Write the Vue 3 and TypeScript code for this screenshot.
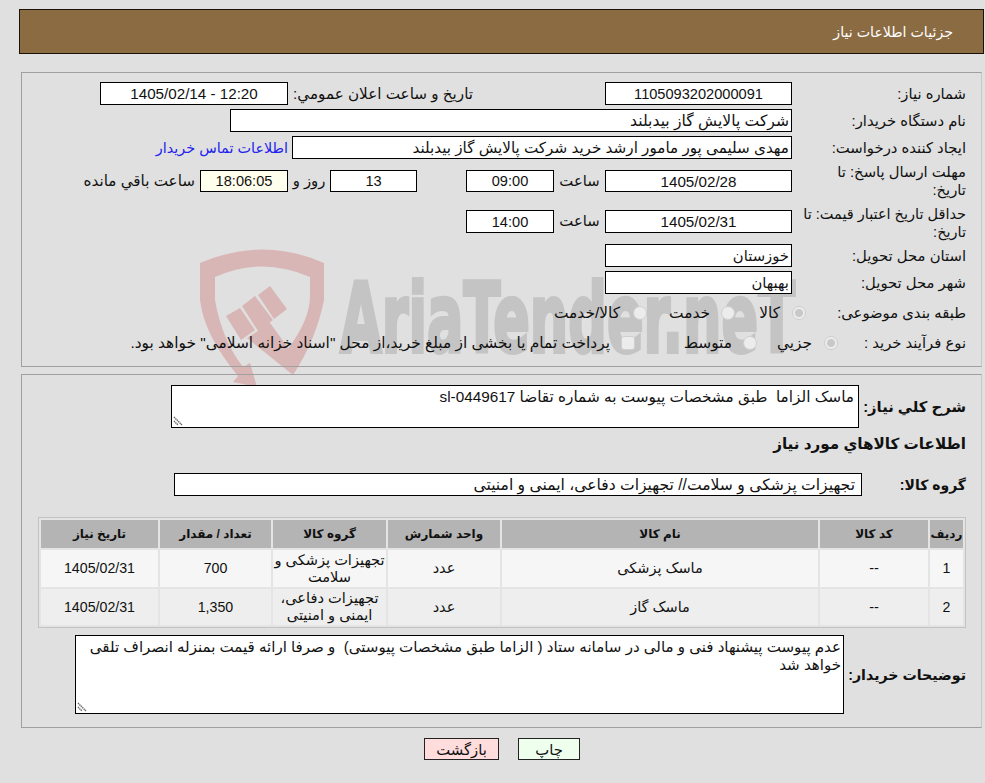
<script setup lang="ts">
interface Item { row: string; code: string; name: string; unit: string; group: string[]; qty: string; date: string }
const items: Item[] = [
  { row: '1', code: '--', name: 'ماسک پزشکی', unit: 'عدد', group: ['تجهیزات پزشکی و', 'سلامت'], qty: '700', date: '1405/02/31' },
  { row: '2', code: '--', name: 'ماسک گاز', unit: 'عدد', group: ['تجهیزات دفاعی،', 'ایمنی و امنیتی'], qty: '1,350', date: '1405/02/31' },
]
</script>

<template>
  <div class="page" dir="rtl">
    <svg class="mark" width="985" height="400" viewBox="0 0 985 400" aria-hidden="true">
      <path d="M200 263 Q263 236 324 263 L324 300 Q316 340 293 375 L287 350 Q310 320 310 296 L310 277 Q262 256 215 277 L215 300 Q222 340 243 367 L250 363 L257 387 L233 382 L238 376 Q204 335 200 300 Z" fill="#d9b6b6" />
      <path d="M226 316 L240 308 L255 330 L241 340 Z M242 306 L255 296 L273 320 L258 332 L268 320 L291 352 L293 375 L247 338 L258 331 Z M258 295 L270 286 L287 309 L274 319 Z" fill="#d9b6b6" />
      <text class="mark-text" x="340" y="352" textLength="455" lengthAdjust="spacingAndGlyphs" dir="ltr">AriaTender.neT</text>
    </svg>

    <header class="title">جزئیات اطلاعات نیاز</header>

    <section class="panel first">
      <div class="row">
        <div class="label">شماره نیاز:</div>
        <div class="box center num date-w">1105093202000091</div>
        <div class="pub-label">تاریخ و ساعت اعلان عمومي:</div>
        <div class="box center dnum pub-w" dir="ltr">1405/02/14 - 12:20</div>
      </div>
      <div class="row">
        <div class="label">نام دستگاه خریدار:</div>
        <div class="box buyer-w">شرکت پالایش گاز بیدبلند</div>
      </div>
      <div class="row">
        <div class="label">ایجاد کننده درخواست:</div>
        <div class="box creator-w">مهدی سلیمی پور مامور ارشد خرید شرکت پالایش گاز بیدبلند</div>
        <a class="link">اطلاعات تماس خریدار</a>
      </div>
      <div class="row tall r4">
        <div class="label two">مهلت ارسال پاسخ: تا<br />تاریخ:</div>
        <div class="box slim center dnum date-w">1405/02/28</div>
        <div class="hour">ساعت</div>
        <div class="box slim center num time-w">09:00</div>
        <div class="box slim center num days-w">13</div>
        <div class="days-label">روز و</div>
        <div class="box slim center num timer">18:06:05</div>
        <div class="remain">ساعت باقي مانده</div>
      </div>
      <div class="row tall r5">
        <div class="label two small">حداقل تاریخ اعتبار قیمت: تا<br />تاریخ:</div>
        <div class="box center dnum date-w">1405/02/31</div>
        <div class="hour">ساعت</div>
        <div class="box center num time-w">14:00</div>
      </div>
      <div class="row r6">
        <div class="label">استان محل تحویل:</div>
        <div class="box date-w">خوزستان</div>
      </div>
      <div class="row">
        <div class="label">شهر محل تحویل:</div>
        <div class="box date-w">بهبهان</div>
      </div>
      <div class="row r8">
        <div class="label wide">طبقه بندی موضوعی:</div>
        <span class="radio on"></span><span class="opt w1">کالا</span>
        <span class="radio"></span><span class="opt w2">خدمت</span>
        <span class="radio"></span><span class="opt w5">کالا/خدمت</span>
      </div>
      <div class="row r9">
        <div class="label short">نوع فرآیند خرید :</div>
        <span class="radio on"></span><span class="opt w3">جزیي</span>
        <span class="radio"></span><span class="opt w4">متوسط</span>
        <span class="check"></span><span class="opt w6">پرداخت تمام یا بخشی از مبلغ خرید،از محل "اسناد خزانه اسلامی" خواهد بود.</span>
      </div>
    </section>

    <section class="panel second">
      <div class="row need">
        <div class="blabel">شرح کلي نیاز:</div>
        <div class="box area need-box">ماسک الزاما&nbsp; طبق مشخصات پیوست به شماره تقاضا sl-0449617<svg class="grip" width="11" height="11" viewBox="0 0 11 11"><path d="M1 2l8 8M1 6l4 4" stroke="#666" stroke-width="1.4" stroke-dasharray="1.4 0.6" fill="none" /></svg></div>
      </div>
      <h2 class="subhead">اطلاعات کالاهاي مورد نیاز</h2>
      <div class="row group">
        <div class="blabel group-label">گروه کالا:</div>
        <div class="box group-box">تجهیزات پزشکی و سلامت// تجهیزات دفاعی، ایمنی و امنیتی</div>
      </div>
      <table class="grid">
        <colgroup>
          <col class="c1" /><col class="c2" /><col class="c3" /><col class="c4" /><col class="c5" /><col class="c6" /><col class="c7" />
        </colgroup>
        <thead>
          <tr>
            <th>ردیف</th><th>کد کالا</th><th>نام کالا</th><th>واحد شمارش</th><th>گروه کالا</th><th>تعداد / مقدار</th><th>تاریخ نیاز</th>
          </tr>
        </thead>
        <tbody>
          <tr v-for="it in items" :key="it.row">
            <td class="numcell">{{ it.row }}</td><td>{{ it.code }}</td><td>{{ it.name }}</td><td>{{ it.unit }}</td>
            <td class="wrap"><span v-for="line in it.group" :key="line" class="line">{{ line }}</span></td>
            <td class="numcell">{{ it.qty }}</td><td class="numcell">{{ it.date }}</td>
          </tr>
        </tbody>
      </table>
      <div class="row notes">
        <div class="blabel notes-label">توضیحات خریدار:</div>
        <div class="box area notes-box">عدم پیوست پیشنهاد فنی و مالی در سامانه ستاد ( الزاما طبق مشخصات پیوستی)&nbsp; و صرفا ارائه قیمت بمنزله انصراف تلقی خواهد شد<svg class="grip" width="11" height="11" viewBox="0 0 11 11"><path d="M1 2l8 8M1 6l4 4" stroke="#666" stroke-width="1.4" stroke-dasharray="1.4 0.6" fill="none" /></svg></div>
      </div>
    </section>

    <div class="actions">
      <button class="btn print" type="button">چاپ</button>
      <button class="btn back" type="button">بازگشت</button>
    </div>
  </div>
</template>

<style>
html, body { margin: 0; background: #e0e0e0; }
</style>

<style scoped>
.page {
  position: relative;
  width: 985px;
  height: 783px;
  overflow: hidden;
  box-sizing: border-box;
  padding-top: 9px;
  background: #e0e0e0;
  color: #111;
  font: 14.8px/18px "Liberation Sans", "DejaVu Sans", sans-serif;
}
.mark { position: absolute; left: 0; top: 0; z-index: 0; }
.mark-text {
  font: bold 96px "DejaVu Sans", sans-serif;
  fill: #c4c4c4;
  stroke: #c4c4c4;
  stroke-width: 4px;
  direction: ltr;
}
.title {
  position: relative;
  z-index: 1;
  box-sizing: border-box;
  height: 45px;
  margin: 0 1px 0 19px;
  padding: 13px 30px 0 0;
  background: #8b6b42;
  border: 1px solid #1a1206;
  color: #fff;
  font-size: 14.2px;
}
.panel {
  position: relative;
  z-index: 1;
  box-sizing: border-box;
  width: 961px;
  margin: 0 3px 0 21px;
  border: 1px solid #a0a0a0;
  border-right-color: #c8c8c8;
}
.first { height: 295px; margin-top: 18px; padding: 9px 15px 0 0; }
.second { height: 354px; margin-top: 7px; padding: 10px 15px 0 0; }
.row { display: flex; align-items: center; height: 23px; margin-bottom: 4px; }
.label { box-sizing: border-box; flex: none; width: 174px; padding-left: 4px; }
.two { white-space: nowrap; }
.small { font-size: 14.5px; padding-top: 3px; }
.box {
  box-sizing: border-box;
  flex: none;
  height: 23px;
  padding: 1px 2px;
  background: #fff;
  border: 1px solid #000;
  line-height: 20px;
  white-space: nowrap;
}
.num { font-size: 14.6px; }
.dnum { font-size: 15.2px; }
.slim { height: 22px; line-height: 19px; }
.center { text-align: center; }
.date-w { width: 187px; }
.pub-w { width: 188px; }
.buyer-w { width: 562px; font-size: 15.6px; }
.creator-w { width: 500px; font-size: 15.2px; }
.pub-label { flex: none; width: 317px; box-sizing: border-box; padding-right: 132px; white-space: nowrap; font-size: 15.2px; }
.link { margin-right: 4px; color: #2222ee; white-space: nowrap; font-size: 14.4px; }
.tall { height: 34px; }
.r4 { margin-top: 5px; }
.r5 { margin-top: 6px; margin-bottom: 0; }
.r6 { margin-top: 6px; }
.hour { flex: none; width: 51px; text-align: center; }
.time-w { width: 88px; }
.days-w { width: 87px; margin-right: 49px; }
.days-label { flex: none; width: 42px; text-align: center; }
.timer { width: 88px; background: #ffffee; }
.remain { margin-right: 5px; white-space: nowrap; font-size: 15.2px; }
.r8 { margin-top: 7px; height: 24px; margin-bottom: 6px; }
.r9 { height: 24px; }
.wide { width: 160px; }
.short { width: 128px; }
.radio, .check {
  flex: none;
  box-sizing: border-box;
  width: 14px;
  height: 14px;
  border: 1px solid #cfcfcf;
  border-radius: 50%;
  background: #ececec;
}
.radio.on { background: radial-gradient(circle, #c8c8c8 0 3.5px, #ececec 4.5px); }
.check { border-radius: 3px; }
.opt { flex: none; box-sizing: border-box; white-space: nowrap; padding-right: 12px; font-size: 15.4px; }
.w1 { width: 57px; }
.w2 { width: 74px; padding-right: 11px; }
.w5 { padding-right: 13px; }
.w3 { width: 67px; }
.w4 { width: 108px; padding-right: 11px; }
.w6 { padding-right: 11px; }
.blabel { font-weight: bold; font-size: 14.5px; }
.need { height: 43px; margin-bottom: 0; }
.need .blabel { flex: none; width: 107px; font-size: 14.8px; }
.area { position: relative; white-space: normal; line-height: 18px; padding: 2px 4px; font-size: 15.3px; }
.need-box { width: 688px; height: 43px; }
.grip { position: absolute; left: 1px; bottom: 1px; }
.subhead { margin: 7px 0 0; font-size: 15.2px; line-height: 18px; font-weight: bold; }
.group { margin-top: 20px; margin-bottom: 0; }
.group-label { flex: none; width: 104px; font-size: 14px; }
.group-box { width: 688px; padding-right: 6px; font-size: 15.6px; }
.grid {
  box-sizing: border-box;
  width: 928px;
  margin: 21px 0 0 0;
  table-layout: fixed;
  border: 1px solid #c2c2c2;
  border-spacing: 2px;
  background: #e4e4e4;
}
.c1 { width: 33px; } .c2 { width: 108px; } .c3 { width: 316px; } .c4 { width: 112px; }
.c5 { width: 113px; } .c6 { width: 111px; } .c7 { width: 117px; }
th {
  height: 28px;
  padding: 0;
  background: #b4b4b4;
  font-size: 12px;
  line-height: 14px;
  font-weight: bold;
}
td { height: 37px; padding: 0 2px; text-align: center; line-height: 17px; font-size: 14.5px; }
.numcell { font-size: 14.2px; }
.wrap { padding: 0; white-space: nowrap; font-size: 14.6px; }
.line { display: block; }
tbody tr:nth-child(1) td { background: #f6f6f6; }
tbody tr:nth-child(2) td { background: #eeeeee; height: 36px; }
.notes { height: 79px; margin-top: 7px; margin-bottom: 0; }
.notes-label { flex: none; width: 122px; font-size: 14.2px; }
.notes-box { width: 769px; height: 79px; padding: 2px; font-size: 15.05px; }
.actions { position: relative; z-index: 1; display: flex; justify-content: center; gap: 19px; margin-top: 10px; padding-left: 19px; }
.btn {
  box-sizing: border-box;
  height: 22px;
  padding: 0;
  border: 1px solid #222;
  color: #111;
  font: 14.8px "Liberation Sans", "DejaVu Sans", sans-serif;
}
.print { width: 62px; background: #eeffee; }
.back { width: 75px; background: #ffdddd; }
</style>
